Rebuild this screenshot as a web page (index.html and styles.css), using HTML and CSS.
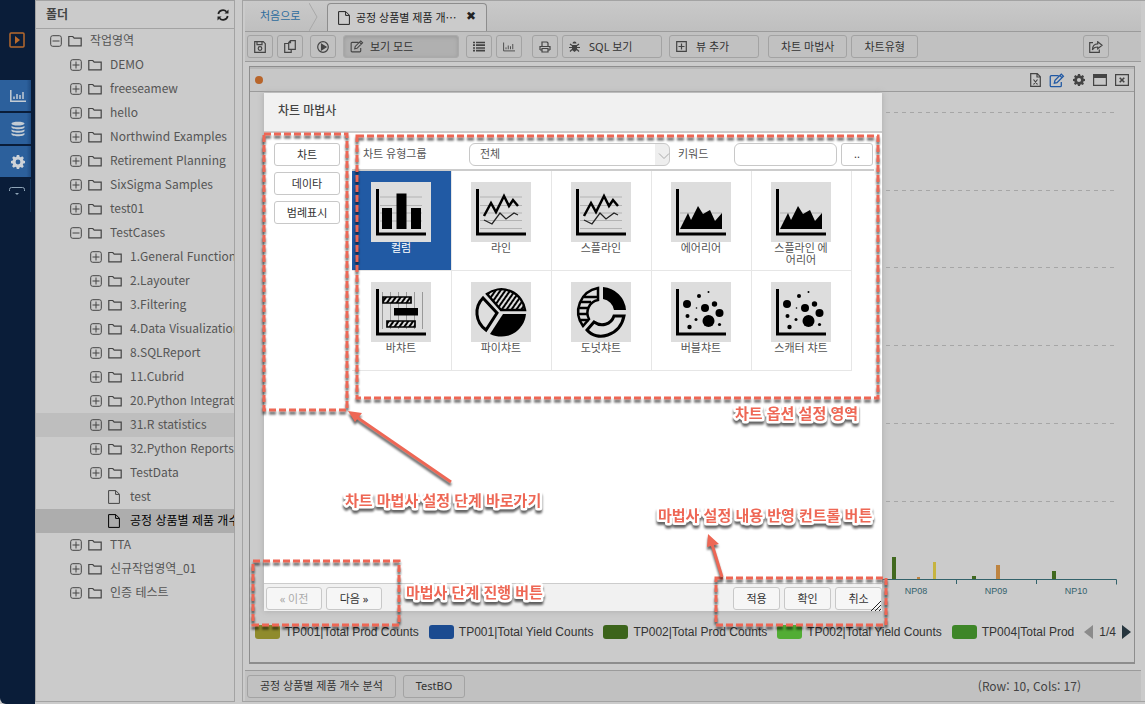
FILE: index.html
```html
<!DOCTYPE html>
<html lang="ko">
<head>
<meta charset="utf-8">
<meta name="viewport" content="width=device-width, initial-scale=1">
<title>차트 마법사</title>
<link rel="stylesheet" href="styles.css">
</head>
<body>
<svg class="sprite" aria-hidden="true">
  <symbol id="plus" viewBox="0 0 12 12"><rect x=".7" y=".7" width="10.6" height="10.6" rx="2"/><path d="M2.5 6h7M6 2.5v7"/></symbol>
  <symbol id="minus" viewBox="0 0 12 12"><rect x=".7" y=".7" width="10.6" height="10.6" rx="2"/><path d="M2.5 6h7"/></symbol>
  <symbol id="folder" viewBox="0 0 14 12"><path d="M.8 10.8V1.5h4l1.4 1.7h7v7.6z"/></symbol>
  <symbol id="file" viewBox="0 0 12 14"><path d="M.6.6h7.2l3.6 3.6v9.2H.6zM7.6.8v3.6h3.6"/></symbol>
  <symbol id="edit" viewBox="0 0 14 14"><path d="M8.5 2.5H1.7a1 1 0 0 0-1 1v8.3a1 1 0 0 0 1 1H10a1 1 0 0 0 1-1V8.5M4.5 9.5l.6-2.6L11 1l2 2-6 6zM9.7 2.4l2 2"/></symbol>
  <symbol id="bars" viewBox="0 0 16 12"><path d="M.8 0v11.2H16M4 9V6.5M7 9V4M10 9V5M13 9V2" fill="none"/></symbol>
  <symbol id="gear" viewBox="0 0 14 14"><path fill-rule="evenodd" d="M5.8 0h2.4l.4 1.8 1.1.5 1.6-1 1.6 1.6-1 1.6.5 1.1 1.6.3v2.3l-1.7.4-.5 1.1 1 1.6-1.6 1.6-1.6-1-1.1.5-.4 1.6H5.8l-.4-1.7-1.1-.5-1.6 1-1.6-1.6 1-1.6-.5-1L0 8.200V5.900l1.700-.4.5-1.100-1-1.600 1.600-1.600 1.600 1 1-.5zM7 4.600a2.400 2.400 0 1 0 0 4.800 2.400 2.400 0 0 0 0-4.800z"/></symbol>
  <symbol id="axes" viewBox="0 0 60 60"><path d="M6.500 7v45H55" fill="none" stroke="#000" stroke-width="3"/></symbol>
  <symbol id="line-chart" viewBox="0 0 60 60"><path d="M9 15h42M9 23.500h42M9 31h42M9 38.500h42M9 46.500h42" stroke="#b3b3b3"/><use href="#axes"/><path d="M13 34l7-13 5 9 8-16 5 10 4-6 5 6" fill="none" stroke="#000" stroke-width="2.500"/><path d="M13 38l8 4 8-11 6 6 8-6 4 2" fill="none" stroke="#222" stroke-width="1.300"/></symbol>
  <symbol id="area-chart" viewBox="0 0 60 60"><path d="M9 31h42M9 39h42" stroke="#b3b3b3"/><use href="#axes"/><path d="M9 47l8-16 3 7 7-14 5 8 7-4 5 11 7-8v16z"/></symbol>
  <symbol id="bubble-chart" viewBox="0 0 60 60"><use href="#axes"/><circle cx="16" cy="22" r="4"/><circle cx="28" cy="14" r="2"/><circle cx="37.500" cy="10" r="1"/><circle cx="34" cy="26" r="4"/><circle cx="43.500" cy="22" r="2.700"/><circle cx="48.500" cy="31" r="4"/><circle cx="37.500" cy="39" r="6"/><circle cx="48.500" cy="42.500" r="1.600"/><circle cx="16.500" cy="34" r="2"/><circle cx="25" cy="37.500" r="1.500"/><circle cx="18.500" cy="45" r="2.200"/><circle cx="25.500" cy="26" r=".8"/></symbol>
  <pattern id="hatch" width="4" height="4" patternUnits="userSpaceOnUse" patternTransform="rotate(35)"><rect width="2" height="4" fill="#000"/></pattern>
</svg>

<div class="app">
  <nav class="rail" aria-label="메뉴">
    <button class="rail-run" aria-label="실행"><svg width="16" height="16" viewBox="0 0 16 16"><rect x="1" y="1" width="14" height="14" rx="1" fill="none" stroke="#b8692c" stroke-width="1.500"/><path d="M6 4l5 4-5 4z" fill="#b8692c"/></svg></button>
    <button class="rail-item" aria-label="차트"><svg width="16" height="12"><use href="#bars"/></svg></button>
    <button class="rail-item" aria-label="데이터"><svg width="14" height="16" viewBox="0 0 14 16" fill="#c4ccd4"><path d="M.5 2.500C.500 0 13.500 0 13.500 2.500S.500 5.500.500 2.500zM.500 5c2 1.800 11 1.800 13 0v1.300c0 2.600-13 2.600-13 0zM.500 8.500c2 1.800 11 1.800 13 0v1.300c0 2.600-13 2.600-13 0zM.500 12c2 1.800 11 1.800 13 0v1.300c0 2.600-13 2.600-13 0z"/></svg></button>
    <button class="rail-item" aria-label="설정"><svg width="14" height="14" fill="#cdd2d8"><use href="#gear"/></svg></button>
    <button class="rail-more" aria-label="더 보기"><svg width="16" height="9" viewBox="0 0 16 9" fill="none" stroke="#8fa5b8"><path d="M.5 4V2.500a2 2 0 0 1 2-2h11a2 2 0 0 1 2 2V4"/><path d="M6 6h4L8 8z" fill="#8fa5b8" stroke="none"/></svg></button>
  </nav>

  <aside class="sidebar">
    <header class="side-head"><h2>폴더</h2><button aria-label="새로 고침"><svg width="12" height="12" viewBox="0 0 12 12" fill="none" stroke="#222" stroke-width="1.700"><path d="M1.300 5A4.700 4.700 0 0 1 9.500 2.800M10.700 7a4.700 4.700 0 0 1-8.200 2.200"/><path d="M11.500.5v4h-4zM.500 11.500v-4h4z" fill="#222" stroke="none"/></svg></button></header>
    <ul class="tree">
      <li class="l0"><svg class="t"><use href="#minus"/></svg><svg class="f"><use href="#folder"/></svg><span>작업영역</span></li>
      <li class="l1"><svg class="t"><use href="#plus"/></svg><svg class="f"><use href="#folder"/></svg><span>DEMO</span></li>
      <li class="l1"><svg class="t"><use href="#plus"/></svg><svg class="f"><use href="#folder"/></svg><span>freeseamew</span></li>
      <li class="l1"><svg class="t"><use href="#plus"/></svg><svg class="f"><use href="#folder"/></svg><span>hello</span></li>
      <li class="l1"><svg class="t"><use href="#plus"/></svg><svg class="f"><use href="#folder"/></svg><span>Northwind Examples</span></li>
      <li class="l1"><svg class="t"><use href="#plus"/></svg><svg class="f"><use href="#folder"/></svg><span>Retirement Planning</span></li>
      <li class="l1"><svg class="t"><use href="#plus"/></svg><svg class="f"><use href="#folder"/></svg><span>SixSigma Samples</span></li>
      <li class="l1"><svg class="t"><use href="#plus"/></svg><svg class="f"><use href="#folder"/></svg><span>test01</span></li>
      <li class="l1"><svg class="t"><use href="#minus"/></svg><svg class="f"><use href="#folder"/></svg><span>TestCases</span></li>
      <li class="l2"><svg class="t"><use href="#plus"/></svg><svg class="f"><use href="#folder"/></svg><span>1.General Function</span></li>
      <li class="l2"><svg class="t"><use href="#plus"/></svg><svg class="f"><use href="#folder"/></svg><span>2.Layouter</span></li>
      <li class="l2"><svg class="t"><use href="#plus"/></svg><svg class="f"><use href="#folder"/></svg><span>3.Filtering</span></li>
      <li class="l2"><svg class="t"><use href="#plus"/></svg><svg class="f"><use href="#folder"/></svg><span>4.Data Visualization</span></li>
      <li class="l2"><svg class="t"><use href="#plus"/></svg><svg class="f"><use href="#folder"/></svg><span>8.SQLReport</span></li>
      <li class="l2"><svg class="t"><use href="#plus"/></svg><svg class="f"><use href="#folder"/></svg><span>11.Cubrid</span></li>
      <li class="l2"><svg class="t"><use href="#plus"/></svg><svg class="f"><use href="#folder"/></svg><span>20.Python Integrati</span></li>
      <li class="l2 hover"><svg class="t"><use href="#plus"/></svg><svg class="f"><use href="#folder"/></svg><span>31.R statistics</span></li>
      <li class="l2"><svg class="t"><use href="#plus"/></svg><svg class="f"><use href="#folder"/></svg><span>32.Python Reports</span></li>
      <li class="l2"><svg class="t"><use href="#plus"/></svg><svg class="f"><use href="#folder"/></svg><span>TestData</span></li>
      <li class="l2 leaf"><svg class="d"><use href="#file"/></svg><span>test</span></li>
      <li class="l2 leaf selected"><svg class="d"><use href="#file"/></svg><span>공정 상품별 제품 개수</span></li>
      <li class="l1"><svg class="t"><use href="#plus"/></svg><svg class="f"><use href="#folder"/></svg><span>TTA</span></li>
      <li class="l1"><svg class="t"><use href="#plus"/></svg><svg class="f"><use href="#folder"/></svg><span>신규작업영역_01</span></li>
      <li class="l1"><svg class="t"><use href="#plus"/></svg><svg class="f"><use href="#folder"/></svg><span>인증 테스트</span></li>
    </ul>
  </aside>
  <div class="splitter"><i></i></div>

  <main class="main">
    <div class="tabs">
      <a class="home" href="#">처음으로</a>
      <svg class="chevron" width="10" height="28" viewBox="0 0 10 28"><path d="M0 0l8 14-8 14" fill="none" stroke="#a8a8a8"/></svg>
      <div class="tab"><svg class="d"><use href="#file"/></svg><span>공정 상품별 제품 개⋯</span><button aria-label="닫기">✖</button></div>
    </div>
    <div class="toolbar">
      <div class="group">
        <button class="btn icon" aria-label="저장"><svg width="12" height="12" viewBox="0 0 12 12"><path d="M.7.7h8.600l2 2v8.600H.700zM3 .7v3h5v-3"/><circle cx="6" cy="7.500" r="1.800"/></svg></button>
        <button class="btn icon" aria-label="복사"><svg width="12" height="13" viewBox="0 0 12 13"><path d="M6.500.7h4.800v8.600H4.700V2.500zM6.500.7v2H4.700M4.500 3.500H.700v8.800h6.500V9.500"/></svg></button>
      </div>
      <button class="btn icon" aria-label="실행"><svg width="12" height="12" viewBox="0 0 12 12"><circle cx="6" cy="6" r="5.300"/><path d="M4.500 3.200L9 6 4.500 8.800z" fill="#444"/></svg></button>
      <button class="btn mode"><svg width="14" height="13"><use href="#edit"/></svg>보기 모드</button>
      <div class="group">
        <button class="btn icon" aria-label="목록"><svg width="12" height="11" viewBox="0 0 12 11"><path d="M0 1.500h2M3 1.500h9M0 4.200h2M3 4.200h9M0 7h2M3 7h9M0 9.700h2M3 9.700h9" stroke-width="1.700"/></svg></button>
        <button class="btn icon" aria-label="차트"><svg width="12" height="10"><use href="#bars"/></svg></button>
      </div>
      <div class="group wide">
        <button class="btn icon" aria-label="인쇄"><svg width="12" height="12" viewBox="0 0 12 12"><path d="M3 5V1h5l1 1v3M1 9V5.500h10V9M3 7.500h6V11H3zM1 9h2M9 9h2"/></svg></button>
        <button class="btn sql"><svg width="11" height="12" viewBox="0 0 11 12"><path d="M3.500 2.500a2 2 0 0 1 4 0zM3 4h5v5L5.500 11 3 9z" fill="#444" stroke="none"/><path d="M0 6.500h11M1 3l2 1.500M10 3L8 4.500M1 10.500l2-2M10 10.500l-2-2"/></svg>SQL 보기</button>
      </div>
      <button class="btn view"><svg width="11" height="11" viewBox="0 0 11 11"><path d="M.7.7h9.600v9.600H.700zM2.500 5.500h6M5.500 2.500v6"/></svg>뷰 추가</button>
      <div class="group last">
        <button class="btn">차트 마법사</button>
        <button class="btn">차트유형</button>
      </div>
      <button class="btn icon share" aria-label="공유"><svg width="14" height="12" viewBox="0 0 14 12"><path d="M4 1.700H.7v9.600h9.600V8.500M8.700.8l4.400 3.500-4.400 3.500V6C6 6 4.500 6.500 3.500 9 3.300 5 5.500 2.800 8.700 2.800z"/></svg></button>
    </div>

    <section class="panel">
      <header class="panel-head">
        <i class="dot"></i>
        <div class="panel-tools">
          <button aria-label="엑셀"><svg width="11" height="14" viewBox="0 0 11 14"><path d="M.7.7h6.600l3 3v9.600H.700zM7 1v3h3M3.500 6.500l4 5M7.500 6.500l-4 5"/></svg></button>
          <button aria-label="편집" class="blue"><svg width="16" height="15"><use href="#edit"/></svg></button>
          <button aria-label="설정" class="solid"><svg width="12" height="12"><use href="#gear"/></svg></button>
          <button aria-label="최대화"><svg width="14" height="12" viewBox="0 0 14 12"><path d="M.6.6h12.800v10.800H.600z"/><path d="M0 0h14v4H0z" fill="#444" stroke="none"/></svg></button>
          <button aria-label="닫기"><svg width="14" height="12" viewBox="0 0 14 12"><path d="M.6.6h12.800v10.800H.600z"/><path d="M4.700 3.700l4.600 4.600M9.300 3.700L4.700 8.300" stroke-width="1.600"/></svg></button>
        </div>
      </header>
      <div class="chart">
        <svg width="257" height="520" viewBox="877 92 257 520" role="img" aria-label="제품별 개수 차트">
          <path d="M886 112.500h229M886 190.500h229M886 267.500h229M886 345.500h229M886 423.500h229M886 501.500h229" stroke="#a6a6a6" stroke-dasharray="4 4"/>
          <g fill="#41691f"><path d="M892 557h4v22h-4zM972 576h4v3h-4zM1052 571h4v8h-4z"/></g>
          <path fill="#be8440" d="M917 577h3v2h-3zM996 565h4v14h-4z"/><path fill="#c6b440" d="M933 562h3v17h-3z"/>
          <path d="M877 579.500h239.500v5M956.500 579v5M1036.500 579v5" fill="none" stroke="#33626b"/>
          <g class="axis"><text x="916" y="594">NP08</text><text x="996" y="594">NP09</text><text x="1076" y="594">NP10</text></g>
        </svg>
      </div>
      <div class="legend">
        <ul>
          <li><i class="c1"></i>TP001|Total Prod Counts</li>
          <li><i class="c2"></i>TP001|Total Yield Counts</li>
          <li><i class="c3"></i>TP002|Total Prod Counts</li>
          <li><i class="c4"></i>TP002|Total Yield Counts</li>
          <li><i class="c5"></i>TP004|Total Prod</li>
        </ul>
        <div class="pager"><button aria-label="이전 범례"><svg width="9" height="14"><path d="M9 0v14L0 7z" fill="#8b8b8b"/></svg></button>1/4<button aria-label="다음 범례"><svg width="9" height="14"><path d="M0 0v14l9-7z" fill="#27363f"/></svg></button></div>
      </div>
    </section>

    <footer class="status">
      <button class="btn">공정 상품별 제품 개수 분석</button>
      <button class="btn">TestBO</button>
      <span class="count">(Row: 10, Cols: 17)</span>
    </footer>

    <section class="dialog" role="dialog" aria-labelledby="dialog-title">
      <header class="dialog-head"><h2 id="dialog-title">차트 마법사</h2></header>
      <div class="dialog-body">
        <nav class="steps">
          <button class="btn">차트</button>
          <button class="btn">데이타</button>
          <button class="btn">범례표시</button>
        </nav>
        <div class="options">
          <form class="filter">
            <label class="group-label" for="chart-group">차트 유형그룹</label>
            <div class="select"><select id="chart-group"><option>전체</option></select><svg width="12" height="8" viewBox="0 0 12 8"><path d="M1 1.500l5 5 5-5" fill="none" stroke="#aaa"/></svg></div>
            <label class="key-label" for="keyword">키워드</label>
            <input id="keyword" type="text">
            <button class="btn search" type="button">..</button>
          </form>
          <ul class="types">
            <li class="on"><svg viewBox="0 0 60 60"><path d="M9 15h42M9 23.500h42M9 31h42M9 39h42" stroke="#b3b3b3"/><use href="#axes"/><path d="M11 26h10v21H11zM25.500 11.500H35.500V47H25.500zM40 26h10v21H40z"/></svg>컬럼</li>
            <li><svg><use href="#line-chart"/></svg>라인</li>
            <li><svg><use href="#line-chart"/></svg>스플라인</li>
            <li><svg><use href="#area-chart"/></svg>에어리어</li>
            <li><svg><use href="#area-chart"/></svg>스플라인 에어리어</li>
            <li><svg viewBox="0 0 60 60"><path d="M11.500 10v37M19.500 10v37M27.500 10v37M35.500 10v37M43.500 10v37M51.500 10v37" stroke="#999"/><use href="#axes"/><path d="M23 26h24v7.500H23z"/><path d="M12 15h28v6H12zM16 39h28v6H16z" fill="#ddd"/><path d="M12 15h28v6H12zM16 39h28v6H16z" fill="url(#hatch)" stroke="#000" stroke-width="1.700"/></svg>바챠트</li>
            <li><svg viewBox="0 0 60 60"><path d="M32 32h23A25 25 0 0 1 19 52z"/><path d="M30 28L16 12a24 24 0 0 1 38 16z" fill="url(#hatch)" stroke="#000" stroke-width="2.500"/><path d="M12 16l14 15-11 17C4 40 3 25 12 16z" fill="none" stroke="#000" stroke-width="3"/></svg>파이챠트</li>
            <li><svg viewBox="0 0 60 60"><path d="M32 5a25 25 0 0 1 23 23H43A13 13 0 0 0 32 17z"/><path d="M27 6v12a13 13 0 0 0-9 19l-6 7A24 24 0 0 1 27 6z" fill="none" stroke="#000" stroke-width="2.500"/><path d="M13 15h13M9 20h11M7 26h10M7 32h10M9 38h9" stroke="#000" stroke-width="2.500"/><path d="M43 34h10c-4 20-27 26-37 14l7-8c7 5 17 3 20-6z" fill="none" stroke="#000" stroke-width="3"/></svg>도넛챠트</li>
            <li><svg><use href="#bubble-chart"/></svg>버블챠트</li>
            <li><svg><use href="#bubble-chart"/></svg>스캐터 챠트</li>
          </ul>
        </div>
      </div>
      <footer class="dialog-foot">
        <button class="btn step" disabled>« 이전</button>
        <button class="btn step">다음 »</button>
        <button class="btn act first">적용</button>
        <button class="btn act">확인</button>
        <button class="btn act">취소</button>
        <svg class="grip" width="10" height="10" viewBox="0 0 10 10"><path d="M0 10L10 0M4 10l6-6M8 10l2-2" stroke="#222"/></svg>
      </footer>
    </section>

    <svg class="notes" width="903" height="704" viewBox="242 0 903 704">
      <g class="boxes">
        <path d="M264 134H347V410H264z"/><path d="M357 136H878V398H357z"/><path d="M253 561H399V625H253z"/><path d="M716 578H886V625H716z"/>
      </g>
      <g class="arrows">
        <path d="M451 482L355 416M722 577l-11-36"/>
        <path class="tip" d="M348 411l14 2-7 9zM708 534l11 10-12 3z"/>
      </g>
      <g class="captions">
        <text x="735" y="419">차트 옵션 설정 영역</text>
        <text x="345" y="506">차트 마법사 설정 단계 바로가기</text>
        <text x="658" y="521">마법사 설정 내용 반영 컨트롤 버튼</text>
        <text x="406" y="598">마법사 단계 진행 버튼</text>
      </g>
    </svg>
  </main>
</div>
</body>
</html>
```
FILE: styles.css
```css
* { box-sizing: border-box; }
body, h2, ul { margin: 0; padding: 0; }
body {
  background: #cbcbcb;
  color: #444;
  font: 11px/16px "Noto Sans", "Noto Sans CJK KR", sans-serif;
}
ul { list-style: none; }
button { margin: 0; padding: 0; border: 0; background: none; color: inherit; font: inherit; }
svg { display: block; flex: none; }
.sprite { position: absolute; width: 0; height: 0; }

.app { display: flex; min-height: 100vh; }

/* icon rail */
.rail { width: 35px; flex: none; padding-top: 32px; background: #0a1d39; border-radius: 0 0 0 6px; }
.rail button { display: flex; align-items: center; justify-content: center; }
.rail-run { width: 34px; height: 16px; margin-bottom: 32px; }
.rail-item { width: 31px; height: 31px; margin-bottom: 2px; padding-left: 4px; background: linear-gradient(90deg, #2c609c 85%, #1f4c82); stroke: #c4ccd4; stroke-width: 1.5px; }
.rail-item svg[fill] { stroke: none; }
.rail-more { width: 31px; height: 33px; padding: 0 0 8px 3px; border-right: 1px solid #17375c; }

/* folder tree */
.sidebar { width: 200px; flex: none; margin-bottom: 2px; border: 1px solid #a3a3a3; overflow: hidden; }
.side-head { display: flex; align-items: center; justify-content: space-between; height: 28px; padding: 0 5px 0 10px; border-bottom: 1px solid #a3a3a3; }
.side-head h2 { font-size: 12px; }
.tree { font-family: "Noto Sans CJK KR", sans-serif; font-size: 12px; color: #555; }
.tree li { display: flex; align-items: center; height: 24px; white-space: nowrap; padding-bottom: 2px; }
.tree svg { fill: none; stroke: #444; }
.t { width: 12px; height: 12px; margin: 2px 6px 0 0; }
.f { width: 14px; height: 12px; margin: 1px 8px 0 0; stroke-width: 1.2px; }
.d { width: 12px; height: 14px; margin: 1px 10px 0 0; fill: none; stroke: #444; }
.l0 { padding-left: 14px; }
.l1 { padding-left: 34px; }
.l2 { padding-left: 54px; }
.leaf { padding-left: 72px; }
.hover { background: #bebebe; }
.selected { background: #adadad; color: #000; }
.tree .selected svg { stroke: #000; }
.splitter { width: 7px; flex: none; display: flex; align-items: center; justify-content: center; }
.splitter i { width: 4px; height: 24px; background: radial-gradient(circle, #8f8f8f 40%, transparent 45%) 0 0 / 2px 2px; }

/* workspace */
.main { position: relative; flex: 1; min-width: 0; display: flex; flex-direction: column; margin-bottom: 2px; padding: 0 4px 0 2px; border: 1px solid #a3a3a3; border-right: 0; }
.tabs { display: flex; height: 31px; padding-left: 15px; background: linear-gradient(#c9c9c9, #bfbfbf); border-bottom: 1px solid #9b9b9b; }
.home { width: 49px; line-height: 30px; color: #2f6c9d; text-decoration: none; white-space: nowrap; }
.chevron { margin-top: 2px; }
.tab { display: flex; align-items: center; width: 160px; height: 28px; margin: 2px 0 0 8px; padding: 0 10px; background: #cbcbcb; border: 1px solid #8d8d8d; border-bottom: 0; border-radius: 4px 4px 0 0; color: #222; white-space: nowrap; }
.tab .d { margin: 0 6px 0 0; stroke: #222; }
.tab button { margin: 0 0 3px auto; font: 12px/12px "DejaVu Sans", sans-serif; }
.toolbar { display: flex; align-items: center; gap: 7px; height: 30px; padding: 0 32px 0 2px; background: #c1c1c1; border-bottom: 1px solid #9b9b9b; }
.group { display: flex; gap: 4px; }
.wide { margin-left: 3px; }
.last { margin-left: 2px; }
.btn { display: flex; align-items: center; height: 23px; padding: 0 12px; border: 1px solid #a3a3a3; border-radius: 3px; color: #333; white-space: nowrap; }
.btn svg { fill: none; stroke: #444; stroke-width: 1.2px; }
.icon { width: 26px; padding: 0; justify-content: center; }
.mode, .sql, .view { padding: 0 0 0 6px; }
.mode { width: 116px; gap: 6px; background: #b0b0b0; border-color: #aaa; box-shadow: inset 0 1px 4px #999; }
.sql { width: 100px; gap: 9px; }
.view { width: 90px; gap: 9px; }
.share { margin-left: auto; }

.panel { flex: 1; display: flex; flex-direction: column; margin: 4px 6px 6px 4px; border: 1px solid #8d8d8d; border-bottom-width: 2px; }
.panel-head { display: flex; align-items: center; justify-content: space-between; height: 25px; padding: 0 5px 0 5px; background: #c7c7c7; border-bottom: 1px solid #9b9b9b; border-top: 2px solid #b7b7b7; }
.dot { width: 8px; height: 8px; border-radius: 50%; background: #b8652b; }
.panel-tools { display: flex; align-items: center; gap: 8px; fill: none; stroke: #444; stroke-width: 1.2px; }
.panel-tools .blue { stroke: #2159a4; }
.panel-tools .solid { fill: #444; stroke: none; }
.chart { display: flex; justify-content: flex-end; flex: 1; }
.axis { font: 9px "Liberation Sans", Arial, sans-serif; fill: #33626b; text-anchor: middle; }
.legend { display: flex; align-items: center; justify-content: space-between; height: 34px; margin-bottom: 13px; padding: 0 3px 0 5px; font: 12px/14px "Liberation Sans", Arial, sans-serif; color: #333; white-space: nowrap; }
.legend ul { display: flex; gap: 10px; min-width: 0; overflow: hidden; }
.legend li { display: flex; align-items: center; gap: 5px; }
.legend i { width: 25px; height: 14px; border-radius: 3px; }
.c1 { background: #8f8b2c; }
.c2 { background: #1b4b90; }
.c3 { background: #3c641b; }
.c4 { background: #52ad35; }
.c5 { background: #3e8628; }
.pager { display: flex; align-items: center; gap: 6px; }
.status { display: flex; align-items: center; gap: 7px; height: 31px; padding: 0 60px 0 2px; background: #c1c1c1; border-top: 1px solid #9b9b9b; }
.count { margin-left: auto; font-family: "Noto Sans CJK KR", sans-serif; font-size: 12px; }

/* chart wizard */
.dialog { position: absolute; left: 21px; top: 92px; display: flex; flex-direction: column; width: 618px; height: 518px; background: #fff; box-shadow: 0 0 6px #aaa; }
.dialog .btn { justify-content: center; background: #fff; border-color: #c8c8c8; }
.dialog-head { height: 40px; padding: 10px 14px; background: #f1f1f1; border-bottom: 2px solid #ccc; }
.dialog-head h2 { font-size: 12px; font-weight: 500; color: #444; }
.dialog-body { flex: 1; display: flex; gap: 12px; padding-left: 10px; }
.steps { display: flex; flex-direction: column; gap: 6px; width: 66px; padding-top: 10px; }
.options { flex: 1; padding-right: 8px; }
.filter { display: flex; align-items: center; height: 38px; padding: 6px 0 0 11px; border-bottom: 2px solid #ccc; color: #555; }
.group-label { width: 106px; }
.key-label { width: 56px; margin-left: 8px; }
.select { position: relative; width: 201px; }
.select select { appearance: none; width: 100%; height: 23px; padding: 0 10px; border: 1px solid #c8c8c8; border-radius: 6px; background: linear-gradient(90deg, transparent 185px, #eee 185px); font: inherit; color: #555; }
.select svg { position: absolute; right: 0; top: 9px; }
.filter input { width: 103px; height: 23px; border: 1px solid #c8c8c8; border-radius: 6px; background: #fff; font: inherit; }
.filter .search { width: 32px; margin-left: 4px; padding: 0; }
.types { display: grid; grid-template-columns: repeat(5, 100px); grid-auto-rows: 100px; }
.types li { display: flex; flex-direction: column; align-items: center; padding: 11px 20px 0 19px; border: solid #e6e6e6; border-width: 0 1px 1px 0; line-height: 12px; text-align: center; word-break: break-all; color: #555; }
.types svg { width: 60px; height: 60px; background: #ddd; }
.types .on { background: #215aa4; color: #fff; background-clip: padding-box; }
.dialog-foot { position: relative; display: flex; gap: 4px; height: 28px; padding: 3px 0 0 2px; background: #f1f1f1; border-top: 1px solid #ccc; }
.dialog-foot .btn { padding: 0; background: #f6f6f6; }
.dialog-foot .btn:disabled { color: #aaa; }
.step { width: 56px; }
.act { width: 47px; }
.first { margin-left: auto; }
.grip { position: absolute; right: 1px; bottom: 0; }

/* callouts over the wizard */
.notes { position: absolute; left: -1px; top: -1px; pointer-events: none; }
.boxes, .arrows, .captions { filter: drop-shadow(0 3px 1px rgba(0, 0, 0, .6)); }
.boxes { fill: none; stroke: #ee6755; stroke-width: 3px; stroke-dasharray: 7 3; }
.arrows { fill: none; stroke: #ee6755; stroke-width: 3px; }
.tip { fill: #ee6755; stroke: none; }
.captions { font: 700 15px "Noto Sans CJK KR", sans-serif; fill: #ee6755; stroke: #fff; stroke-width: 5px; stroke-linejoin: round; paint-order: stroke; }
```
